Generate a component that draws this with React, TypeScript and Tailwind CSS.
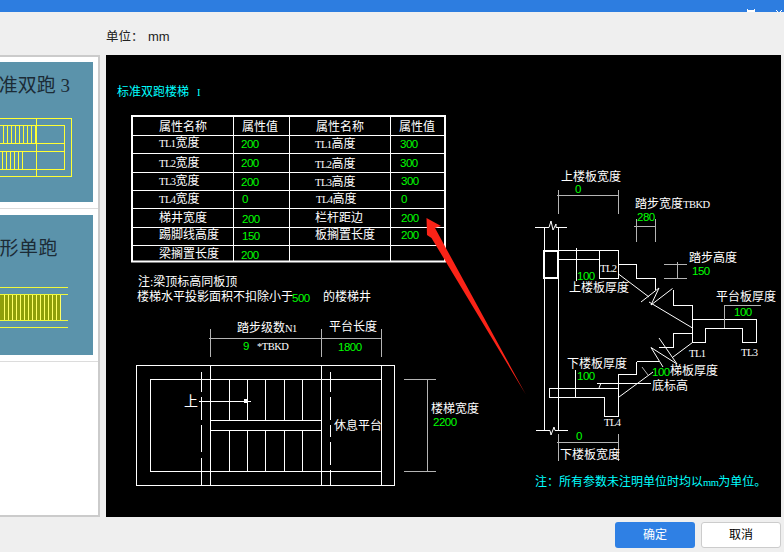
import React from "react";

type TextProps = { x: number; y: number; children: string };

// 西文字符用窄一点的字号，接近 CAD 半角字体
const squeeze = (s: string) =>
  s.split(/([A-Za-z0-9*]+)/).map((part, i) =>
    i % 2 === 1 ? (
      <tspan key={i} className="text-[10.5px] tracking-[-0.5px]">
        {part}
      </tspan>
    ) : (
      part
    )
  );

const Label = ({ x, y, children }: TextProps) => (
  <text x={x} y={y} dominantBaseline="central" className="fill-white text-[12px]">
    {squeeze(children)}
  </text>
);

const Num = ({ x, y, children }: TextProps) => (
  <text
    x={x}
    y={y}
    dominantBaseline="central"
    className="fill-[#00ff00] text-[11.5px] tracking-[-0.5px] font-['Liberation_Sans',sans-serif]"
  >
    {children}
  </text>
);

const Cyan = ({ x, y, children }: TextProps) => (
  <text x={x} y={y} dominantBaseline="central" className="fill-[#00ffff] text-[12px]">
    {squeeze(children)}
  </text>
);

const Line = ({ d, gray, w = 1 }: { d: string; gray?: boolean; w?: number }) => (
  <path d={d} fill="none" stroke={gray ? "#b4b4b4" : "#ffffff"} strokeWidth={w} />
);

const names: [number, number, string, number, number, string][] = [
  [159, 143, "TL1宽度", 315, 144, "TL1高度"],
  [159, 163, "TL2宽度", 315, 164, "TL2高度"],
  [159, 181, "TL3宽度", 315, 182, "TL3高度"],
  [159, 199, "TL4宽度", 316, 199, "TL4高度"],
  [159, 218, "梯井宽度", 315, 218, "栏杆距边"],
  [159, 235, "踢脚线高度", 315, 235, "板搁置长度"],
];

const values: [number, number, string][] = [
  [241, 144, "200"], [241, 163, "200"], [241, 182, "200"], [242, 199, "0"],
  [242, 219, "200"], [242, 236, "150"], [241, 255, "200"],
  [400, 144, "300"], [400, 163, "300"], [401, 181, "300"], [401, 199, "0"],
  [401, 218, "200"], [401, 235, "200"],
];

const StairTable = () => (
  <g>
    <rect x="132" y="116" width="313" height="145.5" fill="none" stroke="#fff" strokeWidth="2" />
    <g shapeRendering="crispEdges">
      <Line d="M132 135.5H445M132 153.5H445M132 172.5H445M132 190.5H445M132 208.5H445M132 227.5H445M132 245.5H445" />
      <Line d="M233.5 116V261M289.5 116V261M390.5 116V261" />
    </g>
    <Label x={159} y={127}>属性名称</Label>
    <Label x={242} y={127}>属性值</Label>
    <Label x={316} y={127}>属性名称</Label>
    <Label x={399} y={127}>属性值</Label>
    {names.map((n) => (
      <React.Fragment key={n[2]}>
        <Label x={n[0]} y={n[1]}>{n[2]}</Label>
        <Label x={n[3]} y={n[4]}>{n[5]}</Label>
      </React.Fragment>
    ))}
    <Label x={159} y={254}>梁搁置长度</Label>
    {values.map((v) => (
      <Num key={`${v[0]}-${v[1]}`} x={v[0]} y={v[1]}>{v[2]}</Num>
    ))}
  </g>
);

const PlanView = () => (
  <g>
    <g shapeRendering="crispEdges">
      <rect x="136.5" y="365.5" width="258" height="120" fill="none" stroke="#fff" />
      <rect x="150.5" y="379.5" width="231" height="92" fill="none" stroke="#fff" />
      <Line d="M210.5 365V485M321.5 365V485M381.5 365V485" />
      <Line d="M210 420.5H322M210 430.5H322" />
      <Line d="M229.5 380V420M247.5 380V420M265.5 380V420M284.5 380V420M302.5 380V420" />
      <Line d="M229.5 431V471M247.5 431V471M265.5 431V471M284.5 431V471M302.5 431V471" />
      <Line d="M201.5 372V392M201.5 397V420M201.5 425V452M201.5 458V485" />
      <Line d="M330.5 372V392M330.5 397V420M330.5 425V437M330.5 442V465M330.5 470V485" />
      <Line d="M199 401.5H251" />
      <rect x="244" y="399" width="4" height="4" fill="#fff" />
      <Line gray d="M209 338.5H381.5M210.5 329V356.5M321.5 329V356.5M381.5 329V356.5" />
      <Line gray d="M404 379.5H436M404 471.5H436M427.5 379V472" />
    </g>
    <text x={184} y={401} dominantBaseline="central" className="fill-white text-[14px]">上</text>
    <Label x={334} y={426}>休息平台</Label>
    <Label x={237} y={328}>踏步级数N1</Label>
    <Num x={243} y={346}>9</Num>
    <Label x={257} y={346}>*TBKD</Label>
    <Label x={329} y={327}>平台长度</Label>
    <Num x={338} y={347}>1800</Num>
    <Label x={431} y={409}>楼梯宽度</Label>
    <Num x={433} y={422}>2200</Num>
  </g>
);

const SectionView = () => (
  <g>
    <g shapeRendering="crispEdges">
      <Line d="M544.5 227V430M558.5 227V430" />
      <Line w={2} d="M544 250.5H558V277.5H544Z" />
      <Line d="M558 250.5H618.5V264.5H636.5V278.5H655.5V290" />
      <Line d="M558 259.5H599.5M599.5 250V278.5H618.5V264" />
      <Line d="M673.5 290V305.5H692.5V319.5H756.5V342.5H742.5V328.5H705.5V342.5H692.5V319" />
      <Line d="M692.5 333.5H673.5V347.5H658.5M636.5 361.5H658.5M636.5 361.5V374.5H618.5V416.5H604.5V397.5H549.5V388.5H618" />
      <Line d="M597 383.5H651" />
      <Line gray d="M557 195.5H618.5M558.5 190V214M618.5 190V214" />
      <Line gray d="M634 226.5H656M636.5 219V242M655.5 219V242" />
      <Line gray d="M664 264.5H687M664 278.5H687M677.5 262V279" />
      <Line gray d="M724 305.5H761M724.5 305V328" />
      <Line gray d="M557 442.5H618.5M558.5 434V461M618.5 434V461" />
      <Line d="M576.5 248V281M575.5 370V398" />
    </g>
    <Line d="M535 227.5H549L551 221L553 230L556 224V227.5H567" />
    <Line d="M536 430.5H550L551 435L554 427L555 430.5H568" />
    <Line d="M618.5 274L649 297M641 302L659 288L651 305L672.5 288.5M649 302L692.5 328" />
    <Line d="M619 397L653 372M673 357L692.5 342.5M651 347.5L677 364M651 347.5L663 367M659 338L677 364" />
    <Line gray d="M642 367L648 375" />
    <Line d="M601 383L599 388" />
    <Label x={561} y={177}>上楼板宽度</Label>
    <Num x={575} y={189}>0</Num>
    <Label x={635} y={204}>踏步宽度TBKD</Label>
    <Num x={637} y={217}>280</Num>
    <Label x={600} y={268}>TL2</Label>
    <Num x={577} y={275.5}>100</Num>
    <Label x={569} y={288}>上楼板厚度</Label>
    <Label x={689} y={258}>踏步高度</Label>
    <Num x={692} y={271}>150</Num>
    <Label x={716} y={297}>平台板厚度</Label>
    <Num x={734} y={312}>100</Num>
    <Label x={689} y={353}>TL1</Label>
    <Label x={741} y={352}>TL3</Label>
    <Label x={567} y={364}>下楼板厚度</Label>
    <Num x={577} y={376}>100</Num>
    <Num x={652} y={372}>100</Num>
    <Label x={670} y={371}>梯板厚度</Label>
    <Label x={652} y={386}>底标高</Label>
    <Label x={604} y={422}>TL4</Label>
    <Num x={576} y={436}>0</Num>
    <Label x={560} y={455}>下楼板宽度</Label>
  </g>
);

const Drawing = () => (
  <svg
    viewBox="106 55 675 462"
    className="block w-full h-full font-['Liberation_Serif','Noto_Sans_CJK_SC',serif]"
  >
    <Cyan x={117} y={92}>标准双跑楼梯</Cyan>
    <Cyan x={197} y={92}>I</Cyan>
    <StairTable />
    <Label x={138} y={282}>注:梁顶标高同板顶</Label>
    <Label x={137} y={297}>楼梯水平投影面积不扣除小于</Label>
    <Num x={292} y={298}>500</Num>
    <Label x={323} y={297}>的楼梯井</Label>
    <PlanView />
    <SectionView />
    <Cyan x={535} y={482}>{"注\uFF1A所有参数未注明单位时均以mm为单位\u3002"}</Cyan>
    <polygon
      points="426.5,218 441,226 435,228 525.5,394 431.5,238 427,235"
      fill="#fb2317"
    />
  </svg>
);

const ThumbDouble = () => {
  const top = Array.from({ length: 10 }, (_, i) => i * 4 - 1);
  const bottom = Array.from({ length: 6 }, (_, i) => i * 4 + 2);
  return (
    <svg viewBox="0 0 93 60" className="block w-[93px] h-[60px]" fill="none" stroke="#ffff33" shapeRendering="crispEdges">
      <path d="M-1 0.5H71.5V58.5H-1M-1 7.5H64.5V51.5H-1M36.5 0V59M-1 25.5H64M-1 33.5H64" />
      {top.map((x) => (
        <path key={x} d={`M${x + 0.5} 8V25`} />
      ))}
      {bottom.map((x) => (
        <path key={x} d={`M${x + 0.5} 34V51`} />
      ))}
    </svg>
  );
};

const ThumbSingle = () => {
  const steps = Array.from({ length: 15 }, (_, i) => 61 - i * 4);
  return (
    <svg viewBox="0 0 93 45" className="block w-[93px] h-[45px]" fill="none" shapeRendering="crispEdges">
      <rect x="0" y="10" width="61" height="25" fill="#8f9f0a" />
      <path d="M0 2.5H68M0 9.5H68M0 35.5H68M0 42.5H68" stroke="#f0f83c" />
      {steps.map((x) => (
        <path key={x} d={`M${x - 0.5} 10V35`} stroke="#ffff66" />
      ))}
    </svg>
  );
};

export default function App() {
  return (
    <div className="w-[784px] h-[552px] flex flex-col overflow-hidden bg-[#efefef] font-['Liberation_Sans','Noto_Sans_CJK_SC',sans-serif]">
      <div className="h-3 shrink-0 flex justify-end items-end gap-5 bg-[#2d7de0] pr-px">
        <div className="w-2 h-[3px] border-x border-b-2 border-white" />
        <svg viewBox="0 0 8 2" className="w-2 h-[2px]" fill="none" stroke="#fff" strokeWidth="1">
          <path d="M1 0L3 2M7 0L5 2" />
        </svg>
      </div>

      <div className="h-[43px] shrink-0 flex items-center pl-[106px] pt-[7px] text-[12.5px] text-[#222]">
        <span className="w-[42px]">{"单位\uFF1A"}</span>
        <span className="text-[13px]">mm</span>
      </div>

      <div className="h-[462px] shrink-0 flex">
        <div className="w-[100px] shrink-0 bg-white border-t-2 border-b-2 border-r-2 border-[#cbcbcb]">
          <div className="pt-[5px] pb-[6px] pr-[5px] border-b border-[#dcdcdc]">
            <div className="h-[140px] bg-[#5b93ab] overflow-hidden">
              <div className="pt-3 pr-[23px] h-9 flex justify-end text-[19px] leading-6 text-[#1c2b36] whitespace-nowrap font-['Liberation_Serif','Noto_Sans_CJK_SC',serif]">
                准双跑 3
              </div>
              <div className="mt-5">
                <ThumbDouble />
              </div>
            </div>
          </div>
          <div className="pt-[6px] pb-[6px] pr-[5px] border-b border-[#dcdcdc]">
            <div className="h-[140px] bg-[#5b93ab] overflow-hidden">
              <div className="pt-[22px] pr-[35px] h-[46px] flex justify-end text-[19px] leading-6 tracking-[0.5px] text-[#1c2b36] whitespace-nowrap">
                形单跑
              </div>
              <div className="mt-6">
                <ThumbSingle />
              </div>
            </div>
          </div>
        </div>

        <div className="ml-[6px] w-[675px] bg-black">
          <Drawing />
        </div>
      </div>

      <div className="flex-1 flex justify-end items-center gap-[6px] pr-[3px] pt-[1px]">
        <button className="w-20 h-[26px] rounded-[3px] bg-[#2f80e4] text-white text-xs">确定</button>
        <button className="w-20 h-[26px] rounded-[3px] bg-white border border-[#cccccc] text-black text-xs">取消</button>
      </div>
    </div>
  );
}
